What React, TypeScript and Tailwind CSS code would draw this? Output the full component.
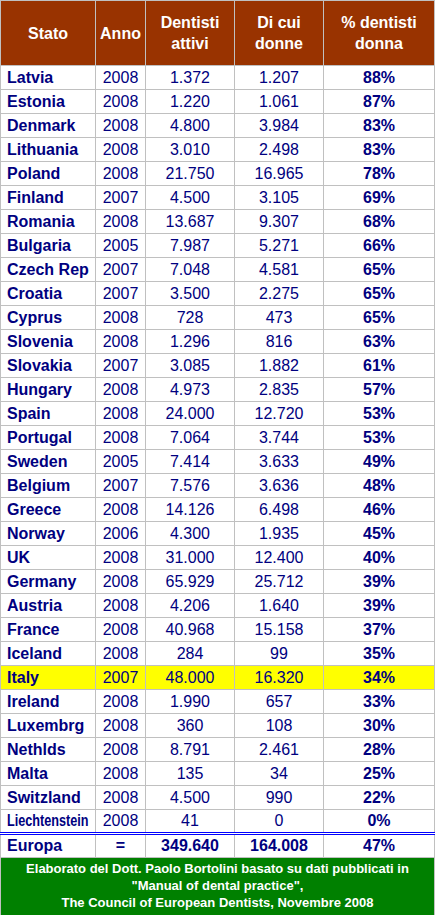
const rows: [string, string, string, string, string][] = [
  ["Latvia", "2008", "1.372", "1.207", "88%"],
  ["Estonia", "2008", "1.220", "1.061", "87%"],
  ["Denmark", "2008", "4.800", "3.984", "83%"],
  ["Lithuania", "2008", "3.010", "2.498", "83%"],
  ["Poland", "2008", "21.750", "16.965", "78%"],
  ["Finland", "2007", "4.500", "3.105", "69%"],
  ["Romania", "2008", "13.687", "9.307", "68%"],
  ["Bulgaria", "2005", "7.987", "5.271", "66%"],
  ["Czech Rep", "2007", "7.048", "4.581", "65%"],
  ["Croatia", "2007", "3.500", "2.275", "65%"],
  ["Cyprus", "2008", "728", "473", "65%"],
  ["Slovenia", "2008", "1.296", "816", "63%"],
  ["Slovakia", "2007", "3.085", "1.882", "61%"],
  ["Hungary", "2008", "4.973", "2.835", "57%"],
  ["Spain", "2008", "24.000", "12.720", "53%"],
  ["Portugal", "2008", "7.064", "3.744", "53%"],
  ["Sweden", "2005", "7.414", "3.633", "49%"],
  ["Belgium", "2007", "7.576", "3.636", "48%"],
  ["Greece", "2008", "14.126", "6.498", "46%"],
  ["Norway", "2006", "4.300", "1.935", "45%"],
  ["UK", "2008", "31.000", "12.400", "40%"],
  ["Germany", "2008", "65.929", "25.712", "39%"],
  ["Austria", "2008", "4.206", "1.640", "39%"],
  ["France", "2008", "40.968", "15.158", "37%"],
  ["Iceland", "2008", "284", "99", "35%"],
  ["Italy", "2007", "48.000", "16.320", "34%"],
  ["Ireland", "2008", "1.990", "657", "33%"],
  ["Luxembrg", "2008", "360", "108", "30%"],
  ["Nethlds", "2008", "8.791", "2.461", "28%"],
  ["Malta", "2008", "135", "34", "25%"],
  ["Switzland", "2008", "4.500", "990", "22%"],
  ["Liechtenstein", "2008", "41", "0", "0%"],
];

const cell = "border border-[#c0c0c0] p-0";
const blueTop = "border-t-[3px] border-double border-t-[#0000ff]";

export default function App() {
  return (
    <div className="min-h-[915px] bg-white font-['Liberation_Sans',Arial,sans-serif] text-[16px]">
      <table className="w-[434px] table-fixed border-collapse">
        <colgroup>
          <col className="w-[95px]" />
          <col className="w-[50px]" />
          <col className="w-[89px]" />
          <col className="w-[89px]" />
          <col className="w-[111px]" />
        </colgroup>
        <thead>
          <tr className="h-[65px] bg-[#993300] font-bold leading-[21px] text-white">
            <th className={`${cell} text-center`}>Stato</th>
            <th className={`${cell} text-center`}>Anno</th>
            <th className={`${cell} text-center`}>
              Dentisti
              <br />
              attivi
            </th>
            <th className={`${cell} text-center`}>
              Di cui
              <br />
              donne
            </th>
            <th className={`${cell} text-center`}>
              % dentisti
              <br />
              donna
            </th>
          </tr>
        </thead>
        <tbody className="text-[#000080]">
          {rows.map((r) => (
            <tr key={r[0]} className={`h-[24px] leading-[18px] ${r[0] === "Italy" ? "bg-[#ffff00]" : ""}`}>
              <td className={`${cell} whitespace-nowrap pl-[6px] font-bold`}>
                {/* the long name is squeezed to fit the column, as in the sheet */}
                <span className={r[0].length > 11 ? "inline-block origin-left scale-x-[0.79]" : ""}>{r[0]}</span>
              </td>
              <td className={`${cell} text-center`}>{r[1]}</td>
              <td className={`${cell} text-center`}>{r[2]}</td>
              <td className={`${cell} text-center`}>{r[3]}</td>
              <td className={`${cell} text-center font-bold`}>{r[4]}</td>
            </tr>
          ))}
          <tr className="h-[24px] font-bold leading-[18px]">
            <td className={`${cell} ${blueTop} pl-[6px]`}>Europa</td>
            <td className={`${cell} ${blueTop} text-center`}>=</td>
            <td className={`${cell} ${blueTop} text-center`}>349.640</td>
            <td className={`${cell} ${blueTop} text-center`}>164.008</td>
            <td className={`${cell} ${blueTop} text-center`}>47%</td>
          </tr>
          <tr className="h-[58px] bg-[#008000]">
            <td colSpan={5} className={`${cell} pb-[3px] text-center text-[13px] font-bold leading-[17px] text-white`}>
              Elaborato del Dott. Paolo Bortolini basato su dati pubblicati in
              <br />
              "Manual of dental practice",
              <br />
              The Council of European Dentists, Novembre 2008
            </td>
          </tr>
        </tbody>
      </table>
    </div>
  );
}
